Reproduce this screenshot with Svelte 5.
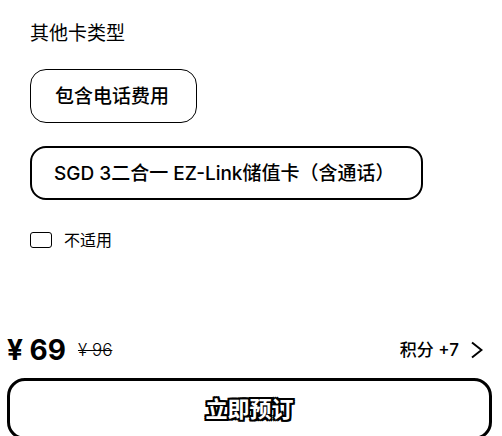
<script>
  const options = ['包含电话费用', 'SGD 3二合一 EZ-Link储值卡（含通话）'];
  let selected = $state(1);
  let notApplicable = $state(false);
</script>

<main>
  <section>
    <h2>其他卡类型</h2>
    <div class="options">
      {#each options as option, i}
        <button
          class="option"
          class:selected={selected === i}
          aria-pressed={selected === i}
          onclick={() => (selected = i)}>{option}</button>
      {/each}
    </div>
    <label class="check">
      <input type="checkbox" bind:checked={notApplicable} />
      <span>不适用</span>
    </label>
  </section>

  <footer>
    <div class="summary">
      <strong>¥ 69</strong>
      <del>¥ 96</del>
      <a class="points" href="#points">
        <span>积分 +7</span>
        <svg width="12" height="18" viewBox="0 0 12 18" aria-hidden="true">
          <path d="M1 1.5 10.5 9 1 16.5" fill="none" stroke="#000" stroke-width="2" />
        </svg>
      </a>
    </div>
    <button class="book">立即预订</button>
  </footer>
</main>

<style>
  :global(body) {
    background: #fff;
    overflow: hidden;
  }
  main,
  button {
    font-family: Inter, 'Noto Sans CJK SC', sans-serif;
    color: #000;
  }
  section {
    padding: 20px 30px 0;
  }
  h2 {
    margin: 0 0 21px;
    font-size: 19px;
    line-height: 28px;
    font-weight: 400;
  }
  .options {
    display: flex;
    flex-direction: column;
    align-items: flex-start;
    gap: 23px;
  }
  .option {
    box-sizing: border-box;
    min-height: 54px;
    padding: 2px 27px 0 24px;
    border: 1px solid #000;
    border-radius: 16px;
    background: #fff;
    font-size: 19px;
    line-height: 28px;
    font-weight: 500;
    white-space: nowrap;
  }
  .option.selected {
    border-width: 2px;
    padding: 2px 26px 0 22px;
  }
  .check {
    display: flex;
    align-items: center;
    gap: 12px;
    margin-top: 28px;
    font-size: 16px;
    line-height: 24px;
  }
  input {
    appearance: none;
    box-sizing: border-box;
    width: 22px;
    height: 16px;
    margin: 0;
    border: 1px solid #000;
    border-radius: 3px;
    background: #fff;
  }
  input:checked {
    background: #000;
  }
  footer {
    padding: 82px 10px 0 7px;
  }
  .summary {
    display: flex;
    align-items: center;
    gap: 12px;
    height: 32px;
    margin-bottom: 12px;
  }
  strong {
    font-size: 28px;
    line-height: 32px;
    font-weight: 700;
  }
  del {
    font-size: 17px;
    line-height: 24px;
    font-weight: 300;
  }
  .points {
    display: flex;
    align-items: center;
    gap: 12px;
    margin-left: auto;
    padding-right: 9px;
    color: #000;
    font-size: 17px;
    line-height: 24px;
    font-weight: 500;
    text-decoration: none;
  }
  .book {
    box-sizing: border-box;
    display: block;
    width: 100%;
    height: 62px;
    border: 3px solid #000;
    border-radius: 18px;
    background: #fff;
    color: #fff;
    font-size: 22px;
    line-height: 32px;
    font-weight: 700;
    text-shadow:
      2px 0 #000,
      -2px 0 #000,
      0 2px #000,
      0 -2px #000,
      2px 2px #000,
      -2px -2px #000,
      2px -2px #000,
      -2px 2px #000;
  }
</style>
